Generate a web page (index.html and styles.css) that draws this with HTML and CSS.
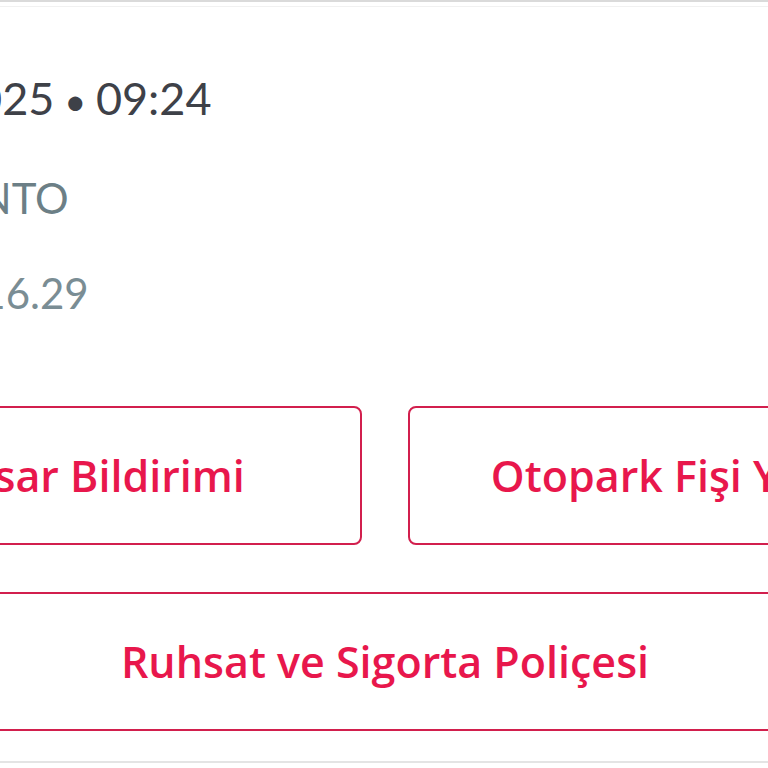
FILE: index.html
```html
<!DOCTYPE html>
<html lang="tr">
<head>
    <meta charset="UTF-8">
    <meta name="viewport" content="width=device-width, initial-scale=1.0">
    <title>Araç Detayı</title>
    <link rel="stylesheet" href="styles.css">
</head>
<body>
    <div class="topline"></div>

    <main class="card">
        <div class="info">
            <p class="date">2025<span class="sep"> • </span>09:24</p>
            <p class="model">RENTO</p>
            <p class="plate">116.29</p>
        </div>

        <div class="actions">
            <a href="#" class="btn">Hasar Bildirimi</a>
            <a href="#" class="btn">Otopark Fişi Yükle</a>
            <a href="#" class="btn wide">Ruhsat ve Sigorta Poliçesi</a>
        </div>
    </main>
</body>
</html>
```

FILE: styles.css
```css
body {margin: 0; overflow: hidden; background: #fff; font-family: Lato, "Open Sans", sans-serif;}
.topline {height: 4px; border-top: 2px solid #dadada; border-bottom: 1px solid #f1f1f1;}
.card {margin-left: -180px; width: 1130px; padding-bottom: 30px; border-bottom: 2px solid #e4e4e4;}
.info {padding: 63px 0 0 132px;}
.info p {margin: 0; white-space: nowrap;}
.date {font-size: 45px; line-height: 56px; color: #3e4148; text-indent: -2px;}
.date .sep {font-size: 38px; line-height: 1;}
.model {font-size: 42px; line-height: 50px; margin-top: 47px !important; color: #6c7f86; text-indent: -23px;}
.plate {font-size: 42px; line-height: 50px; margin-top: 45px !important; color: #7a8d94; text-indent: 5px;}
.actions {display: grid; grid-template-columns: 1fr 1fr; gap: 47px 46px; margin-top: 88px;}
.btn {display: flex; align-items: center; justify-content: center; height: 135px; border: 2px solid #d21f4d; border-radius: 8px; color: #e8174c; font-family: "Open Sans", Lato, sans-serif; font-size: 43px; font-weight: 600; text-decoration: none;}
.btn.wide {grid-column: 1 / 3;}
```
